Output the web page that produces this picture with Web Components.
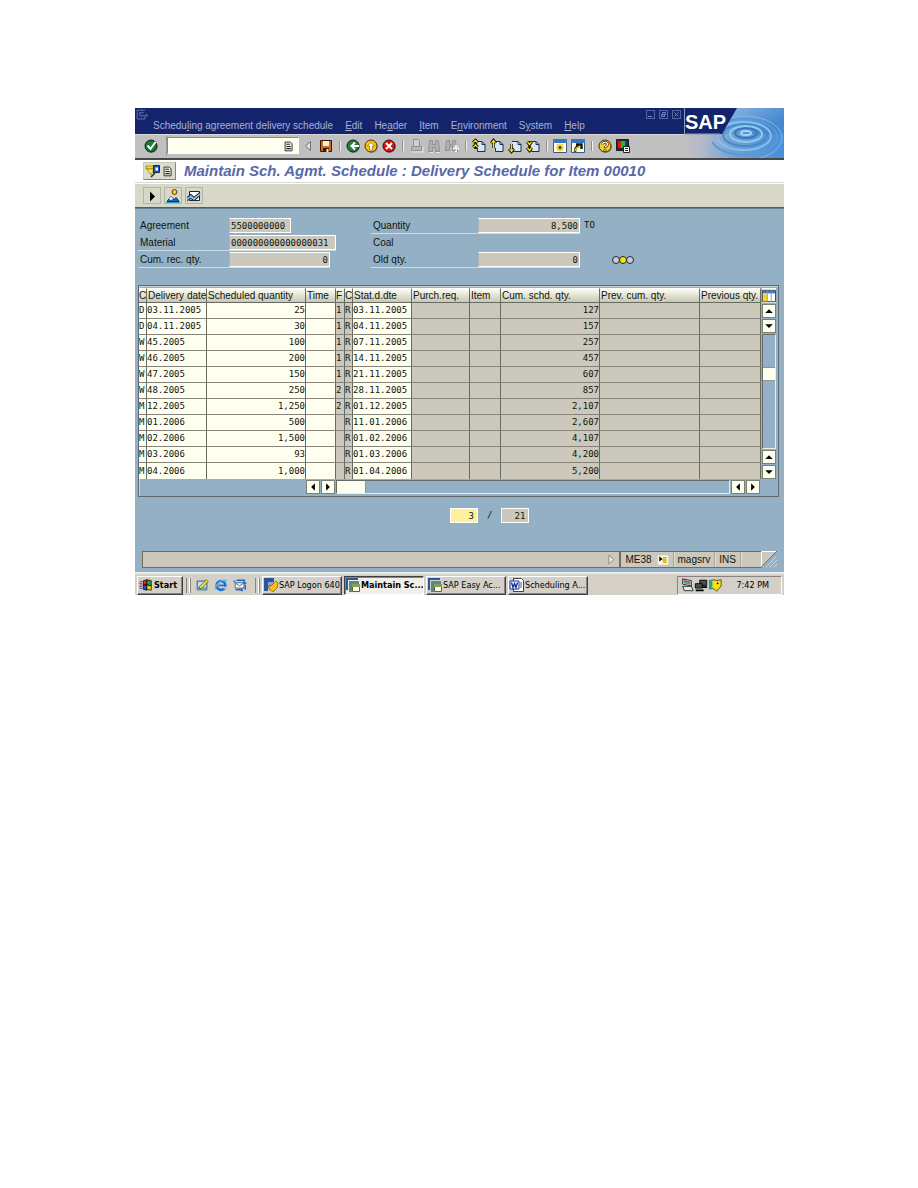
<!DOCTYPE html>
<html lang="en">
<head>
<meta charset="utf-8">
<title>Maintain Sch. Agmt. Schedule</title>
<style>
  body { margin: 0; background: #fff; font: 10px/12px "Liberation Sans", Arial, sans-serif; color: #10140c; }
  sap-window { margin: 108px 134px 0 135px; }
</style>
</head>
<body>
<sap-window>
  <sap-header slot="header"></sap-header>
  <sap-titlebar slot="header">Maintain Sch. Agmt. Schedule : Delivery Schedule for Item 00010</sap-titlebar>
  <sap-form></sap-form>
  <sap-schedule></sap-schedule>
  <sap-pager></sap-pager>
  <sap-status></sap-status>
  <win-taskbar slot="footer"></win-taskbar>
</sap-window>

<script>
const BASE = `<style>
  *, *::before, *::after { box-sizing: border-box; }
  :host { display: block; box-sizing: border-box; }
  button, input { font: inherit; color: inherit; margin: 0; padding: 0; border: 0; background: none; border-radius: 0; outline: 0; }
  button { display: flex; align-items: center; justify-content: center; }
  a { color: inherit; text-decoration: none; }
</style>`;

function define(name, html) {
  customElements.define(name, class extends HTMLElement {
    constructor() {
      super();
      this.attachShadow({ mode: 'open' });
    }
    connectedCallback() {
      const t = document.createElement('template');
      t.innerHTML = BASE + (typeof html === 'function' ? html(this) : html);
      this.shadowRoot.replaceChildren(t.content.cloneNode(true));
    }
  });
}

const page = '<path d="M5 3.5h6l3 3v7H6.5V10" fill="#d4e8f8" stroke="#203040"/><path d="M11 3.5v3h3" fill="none" stroke="#203040"/>';
const ICONS = {
  sysmenu: '<path d="M11.500 2.500h-9v10h9v-3M5 5.500h5M5.500 5v4h9M12 6.500l2.500 2.500" fill="none" stroke="#7080bc"/>',
  check: '<circle cx="8.500" cy="9" r="6" fill="#888"/><circle cx="8" cy="8" r="6" fill="#187838" stroke="#102010"/><path d="M4.5 7.5l3 3.5 5-7" fill="none" stroke="#fff" stroke-width="2"/>',
  list: '<path d="M3.5 3.5h6l2 2v8h-8z" fill="#f0f0e8" stroke="#202020"/><path d="M5 6h4M5 8.500h5M5 11h5" stroke="#202020" stroke-width="1.200"/>',
  left: '<path d="M10.5 3.5v9L5.500 8z" fill="#e0e0e0" stroke="#707070"/>',
  save: '<path d="M2.5 2.5h11v11h-11z" fill="#d06818" stroke="#301808"/><path d="M5 3h6v5H5z" fill="#f8f0d8"/><path d="M5 10h6v4H5z" fill="#381808"/><path d="M8.5 11h2v3h-2z" fill="#f0e8d8"/>',
  back: '<circle cx="9" cy="9" r="6" fill="#8890b0"/><circle cx="8" cy="8" r="6" fill="#208038" stroke="#102010"/><path d="M14 8H7M10 4.5L6.500 8l3.5 3.5" fill="none" stroke="#fff" stroke-width="2"/>',
  exit: '<circle cx="9" cy="9" r="6" fill="#8890b0"/><circle cx="8" cy="8" r="6" fill="#f8c010" stroke="#503808"/><path d="M4.5 8L8 4.5 11.5 8h-2v4h-3V8z" fill="#fff" stroke="#806008" stroke-width=".6"/>',
  cancel: '<circle cx="9" cy="9" r="6" fill="#8890b0"/><circle cx="8" cy="8" r="6" fill="#e01010" stroke="#400808"/><path d="M5 5l6 6M11 5l-6 6" stroke="#fff" stroke-width="2"/>',
  print: '<path d="M5.5 1.5h5l1 1v6h-6z" fill="#d0d0d0" stroke="#909090"/><path d="M3.5 8.5h10v4h-10z" fill="#b8b8b8" stroke="#909090"/><path d="M4 14h11V9" fill="none" stroke="#e8e8e8"/>',
  find: '<path d="M3.5 2.5h3v4h3v-4h3l1 11h-4v-4h-3v4h-4z" fill="#b0b0b0" stroke="#909090"/><path d="M4 14.5h3M10 14.5h4" stroke="#e8e8e8"/>',
  findnext: '<path d="M2.5 2.5h3v4h3v-4h3l1 10h-4v-4h-3v4h-4z" fill="#b0b0b0" stroke="#909090"/><path d="M12 7v7M9 10.5h6" stroke="#f0f0f0" stroke-width="2"/><path d="M13.5 11.500v3M10 12h2" stroke="#909090"/>',
  first: page + '<path d="M2 4.5L4.5 2 7 4.5M2 9l2.500-2.500L7 9M4.5 2v9" fill="none" stroke="#181808" stroke-width="2.6"/><path d="M2.5 4.5l2-2 2 2M2.5 9l2-2 2 2" fill="none" stroke="#ffe010" stroke-width="1.4"/>',
  prev: page + '<path d="M4.5 2v8M2 5l2.500-3L7 5" fill="none" stroke="#181808" stroke-width="2.6"/><path d="M4.5 3v7M2.5 5l2-2.500 2 2.500" fill="none" stroke="#ffe010" stroke-width="1.2"/>',
  next: page + '<path d="M4.5 6v8M2 11l2.500 3L7 11" fill="none" stroke="#181808" stroke-width="2.6"/><path d="M4.5 6v7M2.5 11l2 2.500 2-2.500" fill="none" stroke="#ffe010" stroke-width="1.2"/>',
  last: page + '<path d="M2 4l2.500 3L7 4M2 10l2.500 3L7 10M4.5 3v10" fill="none" stroke="#181808" stroke-width="2.6"/><path d="M2.5 4l2 2.500 2-2.500M2.5 10l2 2.500 2-2.500" fill="none" stroke="#ffe010" stroke-width="1.4"/>',
  session: '<path d="M1.5 1.5h13v13h-13z" fill="#fffff0" stroke="#405878"/><path d="M1 1h14v4H1z" fill="#3878c0"/><path d="M8 5.500v8M4 9.500h8M5 6.500l6 6M11 6.500l-6 6" stroke="#e8c000" stroke-width="1.4"/><circle cx="8" cy="9.500" r="1.200" fill="#303000"/>',
  shortcut: '<path d="M1.5 1.5h13v13h-13z" fill="#fffff0" stroke="#405878"/><path d="M1 1h14v4H1z" fill="#3878c0"/><path d="M5 14c0-4 1-5 4-6M6 6.500h5.500V11" fill="none" stroke="#181808" stroke-width="2.4"/><path d="M5 13.500c0-3 1-4 4-5" fill="none" stroke="#ffe010" stroke-width="1.200"/>',
  help: '<circle cx="9" cy="9" r="6" fill="#909090"/><circle cx="8" cy="8" r="6" fill="#f8d020" stroke="#403008"/><path d="M5.5 6.5c0-3 5-3 5 0 0 1.500-2.500 1.500-2.500 3.500" fill="none" stroke="#403008" stroke-width="2.6"/><path d="M5.5 6.5c0-3 5-3 5 0 0 1.500-2.500 1.500-2.500 3" fill="none" stroke="#fff" stroke-width="1.200"/><path d="M7 11h2v2H7z" fill="#fff" stroke="#403008" stroke-width=".6"/>',
  layout: '<path d="M1.5 1.5h12v11h-12z" fill="#282828" stroke="#202020"/><path d="M3 3h3v7H3z" fill="#e01818"/><path d="M6 3h4v7H6z" fill="#18c018"/><path d="M10 3h2v5h-2z" fill="#1838d0"/><path d="M8.5 8.5h6v6h-6z" fill="#fff" stroke="#202020"/><path d="M10 10.500h3M10 12.500h3" stroke="#202020"/>',
  services: '<path d="M1 3h8v3H1z" fill="#f8d818" stroke="#806800" stroke-width=".6"/><path d="M2 6l4 6 3-6z" fill="#f8e860" stroke="#806800" stroke-width=".6"/><path d="M8.5 2.5h6v7h-6z" fill="#2858b8" stroke="#102848"/><path d="M10.5 4.500h2.500v3h-2.500z" fill="#fff"/><path d="M6 14l4-4" stroke="#203040" stroke-width="1.6"/>',
  play: '<path d="M6 3.500l5 5-5 5z" fill="#000"/>',
  scene: '<path d="M2 13.5l4-5 3 3 2-2 3 4z" fill="#2868b8" stroke="#102848"/><path d="M4 11l2-2.500L8 11l-2 1z" fill="#fff"/><circle cx="9.500" cy="4" r="2.500" fill="#f8c820" stroke="#604008"/><path d="M1 14.5h14" stroke="#38a0d8"/>',
  chart: '<path d="M3.5 3.5h10v9h-10z" fill="#fff" stroke="#202020"/><path d="M1 9.5l4-3 3 3 6-5M1 12.5l4-2 3 2 6-5" fill="none" stroke="#183050" stroke-width="1.2"/><path d="M1 11l4-2.500 3 2.500 6-5" fill="none" stroke="#90b8d8" stroke-width="1.600"/>',
  config: '<path d="M.5 1.500h15v13H.5z" fill="#fff" stroke="#182840"/><path d="M1 2h14v3H1z" fill="#3878c8"/><path d="M1 5h5v9H1z" fill="#f8d820"/><path d="M6 2v12M10.500 2v12" stroke="#8098b0"/>',
  up: '<path d="M3 10.500l5-5 5 5z" fill="#000"/>',
  down: '<path d="M3 5.500l5 5 5-5z" fill="#000"/>',
  aleft: '<path d="M10.500 3v10l-5-5z" fill="#000"/>',
  aright: '<path d="M5.500 3v10l5-5z" fill="#000"/>',
  more: '<path d="M5.5 2.500v10l6-5z" fill="#e8e8d8" stroke="#888478"/>',
  tcode: '<path d="M1.5 2.5h13v11h-13z" fill="#ffffe0" stroke="#fff"/><path d="M8 5h5M7 8h6M8 11h5" stroke="#c8a000" stroke-width="2"/><path d="M3 3l4.500 3.500L3 10z" fill="#000"/>',
  win: '<g stroke="#000" stroke-width=".8"><path d="M5 3l4-1v6H5z" fill="#e02818"/><path d="M9 2l5 1v6L9 8z" fill="#30a030"/><path d="M5 8h4v6l-4-1z" fill="#2850c8"/><path d="M9 8l5 1v5l-5-1z" fill="#f8d010"/></g><path d="M1 4h3M0 6h4M1 8h3" stroke="#c02818"/><path d="M0 10h4M1 12h3" stroke="#2850c8"/>',
  desk: '<path d="M2.5 3.5h11v10h-11z" fill="#b8e0f0" stroke="#284878"/><path d="M3 11c4-3 6 1 10-1v3H3z" fill="#68a8c8"/><path d="M5 10l8-8 2 2-8 8H5z" fill="#f8e040" stroke="#604808" stroke-width=".8"/>',
  ie: '<circle cx="8" cy="8.500" r="5" fill="none" stroke="#2070d0" stroke-width="3"/><path d="M5 8.500h8" stroke="#2070d0" stroke-width="2"/><path d="M10.5 11h4" stroke="#d4d0c8" stroke-width="2"/><path d="M1 13C3 6 9 1 15 3" fill="none" stroke="#68b0f0" stroke-width="1.4"/>',
  mail: '<path d="M2.5 5.5h10v6h-10z" fill="#fff" stroke="#405878"/><path d="M3 6l4.500 3L12 6" fill="none" stroke="#405878"/><path d="M4 2.500h9v3M1 5l1-2M3 13.500h7M14 8v5.500" fill="none" stroke="#1868d0" stroke-width="1.6"/><path d="M11 5l2.500 3L16 5zM11 11l-3 2.500 3 2.500z" fill="#1868d0"/>',
  logon: '<path d="M1 1h10v4H5v9H1z" fill="#285898"/><path d="M5 5h6v6H5z" fill="#88a8d0"/><path d="M6 8l2 1 5-5 2 2-1 5-4 4-4-3z" fill="#f8c018" stroke="#a05808" stroke-width=".8"/>',
  sapwin: '<path d="M1 1h12v2H3v10H1z" fill="#285898"/><path d="M4 4h10v3H7v8H4z" fill="#588888"/><path d="M7.5 7.5h7v7h-7z" fill="#fffff0" stroke="#506838"/><path d="M7 7h8v3H7z" fill="#88a048"/>',
  word: '<path d="M4.5 1.5h8l2 2v11h-10z" fill="#fff" stroke="#404040"/><path d="M1 4h9v8H1z" fill="#fff" stroke="#1830a0"/><path d="M2.5 5.5l1.500 5 1.500-4 1.500 4 1.500-5" fill="none" stroke="#1830a0" stroke-width="1.4"/><path d="M11 6h2M11 8h2M11 10h2" stroke="#606060"/>',
  traymon: '<path d="M3 1l10 2v6L3 7z" fill="#f0f0f0" stroke="#202020"/><path d="M4 2l8 2v2L4 4z" fill="#e020c0"/><path d="M4 4l8 2v2L4 6z" fill="#20c040"/><path d="M3 9.500h10l2 5H5z" fill="#e8e8e8" stroke="#202020"/>',
  traynet: '<path d="M6.5 2.5h8v6h-8z" fill="#485058" stroke="#000"/><path d="M1.5 6.500h8v5h-8z" fill="#485058" stroke="#000"/><path d="M2 14h9M9 10.500h6" stroke="#000" stroke-width="2"/>',
  trayshield: '<path d="M3 3l4-1 3 1 5-1v7l-5 6-4-3-3-1z" fill="#f8e018" stroke="#504808"/><path d="M1 2h4v11H1z" fill="#28a0a0"/><circle cx="11" cy="6" r="1" fill="#000"/>'
};

define('sap-icon', el => `<style>
  :host { flex: none; width: 14px; height: 14px; }
  :host([size="16"]) { width: 16px; height: 16px; }
  :host([size="12"]) { width: 12px; height: 12px; }
  svg { display: block; width: 100%; height: 100%; }
</style><svg viewBox="0 0 16 16" aria-hidden="true">${ICONS[el.getAttribute('name')]}</svg>`);

define('sap-window', `<style>
  main { background: #94b0c4; padding: 9px 5px 4px 3px; border-top: 1px solid #688494; border-bottom: 1px solid #e8ecec; }
</style>
<slot name="header"></slot>
<main><slot></slot></main>
<slot name="footer"></slot>`);

define('sap-brand', `<style>
  svg { display: block; width: 100%; height: 50px; }
  text { font: bold 20px/22px "Liberation Sans", Arial, sans-serif; }
</style>
<svg viewBox="0 0 100 50" preserveAspectRatio="none" role="img" aria-label="SAP">
  <defs>
    <linearGradient id="w" x1="0" x2="1"><stop offset="0" stop-color="#c0c0c0"/><stop offset=".2" stop-color="#b0b8cc"/><stop offset=".5" stop-color="#70a0d0"/><stop offset="1" stop-color="#4890d8"/></linearGradient>
    <linearGradient id="t" x1="0" x2="1" y2=".4"><stop offset=".4" stop-color="#88b4dc"/><stop offset="1" stop-color="#4488d0"/></linearGradient>
    <clipPath id="c"><path d="M53 0H100V50H16L34 27z"/></clipPath>
  </defs>
  <path d="M0 0h100v26H0z" fill="url(#t)"/>
  <path d="M0 26h100v24H0z" fill="url(#w)"/>
  <g clip-path="url(#c)" fill="none" stroke-width="2">
    <ellipse cx="62" cy="25" rx="5" ry="2" stroke="#a8d8f8"/>
    <ellipse cx="62" cy="25" rx="11" ry="5" stroke="#3878c0"/>
    <ellipse cx="62" cy="26" rx="16" ry="8" stroke="#90ccf4"/>
    <ellipse cx="61" cy="27" rx="22" ry="11" stroke="#4888cc"/>
    <ellipse cx="60" cy="28" rx="27" ry="14" stroke="#84c0f0"/>
    <ellipse cx="60" cy="29" rx="33" ry="18" stroke="#5898d8"/>
    <ellipse cx="60" cy="30" rx="38" ry="22" stroke="#80b8ec" stroke-width="1"/>
  </g>
  <path d="M0 0h53Q46 12 38 26H0z" fill="#14246c"/>
  <path d="M0 26h36" stroke="#9098b0"/>
  <path d="M.5 0v26" stroke="#9098b0"/>
  <text x="1" y="21" fill="#fff">SAP</text>
</svg>`);

const tools = [
  ['left', 'Close command field'], ['save', 'Save'], null, ['back', 'Back'], ['exit', 'Exit'], ['cancel', 'Cancel'], null,
  ['print', 'Print'], ['find', 'Find'], ['findnext', 'Find next'], null,
  ['first', 'First page'], ['prev', 'Previous page'], ['next', 'Next page'], ['last', 'Last page'], null,
  ['session', 'New session'], ['shortcut', 'Create shortcut'], null, ['help', 'Help'], ['layout', 'Customise layout']
];
define('sap-header', `<style>
  :host { display: grid; grid-template-columns: 1fr 100px; grid-template-rows: 26px 24px; border-bottom: 2px solid #484848; background: #c0c0c0; }
  .menu { background: #14246c; color: #a8b0d8; display: grid; grid-template-rows: 12px 14px; }
  .caption { display: flex; justify-content: space-between; padding: 0 3px 0 0; }
  .caption div { display: flex; gap: 4px; padding-top: 2px; }
  .caption div button { width: 9px; height: 9px; border: 1px solid #5464a4; color: #7484bc; }
  .caption svg { width: 7px; height: 7px; display: block; }
  nav { display: flex; gap: 12px; padding-left: 18px; white-space: nowrap; }
  sap-brand { grid-column: 2; grid-row: 1 / 3; }
  .bar { display: flex; align-items: center; border-top: 1px solid #d8d8d8; padding-bottom: 2px; }
  .bar button { width: 18px; height: 20px; flex: none; }
  .bar .ok { width: 32px; border-right: 1px solid #989898; }
  .cmd { display: flex; align-items: center; background: #fffff0; width: 132px; height: 17px; border: 1px solid #888; border-color: #888 #fff #fff #888; }
  .cmd input { flex: 1; min-width: 0; }
  .sep { width: 9px; height: 10px; flex: none; display: flex; justify-content: center; }
  .sep::before { content: ""; width: 2px; border-left: 1px solid #909090; background: #f0f0f0; }
</style>
<div class="menu">
  <div class="caption"><sap-icon name="sysmenu"></sap-icon>
    <div>
      <button aria-label="Minimise"><svg viewBox="0 0 7 7"><path d="M1 5.5h4" stroke="currentColor"/></svg></button>
      <button aria-label="Restore"><svg viewBox="0 0 7 7"><path d="M2.5 1.5h3v2h-3zM1.5 3.5h3v2h-3z" fill="none" stroke="currentColor"/></svg></button>
      <button aria-label="Close"><svg viewBox="0 0 7 7"><path d="M1.5 1.5l4 4M5.5 1.5l-4 4" stroke="currentColor"/></svg></button>
    </div>
  </div>
  <nav>
    <a href="#">Schedu<u>l</u>ing agreement delivery schedule</a>
    <a href="#"><u>E</u>dit</a><a href="#">He<u>a</u>der</a><a href="#"><u>I</u>tem</a>
    <a href="#">E<u>n</u>vironment</a><a href="#">S<u>y</u>stem</a><a href="#"><u>H</u>elp</a>
  </nav>
</div>
<div class="bar">
  <button class="ok" aria-label="Enter"><sap-icon name="check" size="16"></sap-icon></button>
  <div class="cmd"><input aria-label="Command"><button aria-label="Command history"><sap-icon name="list"></sap-icon></button></div>
  ${tools.map(t => t ? `<button aria-label="${t[1]}"><sap-icon name="${t[0]}" size="16"></sap-icon></button>` : '<span class="sep"></span>').join('')}
</div>
<sap-brand></sap-brand>`);

define('sap-titlebar', `<style>
  .title { display: flex; align-items: center; height: 23px; background: #fff; border-bottom: 1px solid #d8d8d8; padding-left: 8px; gap: 8px; }
  .title button { width: 33px; height: 18px; background: #dcdccc; border: 1px solid; border-color: #c8c8c0 #888478 #888478 #c8c8c0; }
  h1 { margin: 0; font: italic bold 15px/18px "Liberation Sans", Arial, sans-serif; color: #5868a8; white-space: nowrap; }
  .tools { display: flex; align-items: center; height: 25px; background: #d8d8c8; border-top: 1px solid #fff; border-bottom: 1px solid #585c58; padding-left: 8px; gap: 3px; }
  .tools button { width: 18px; height: 17px; border: 1px solid #b4b4a8; }
</style>
<div class="title"><button aria-label="Services for object"><sap-icon name="services" size="16"></sap-icon><sap-icon name="list"></sap-icon></button><h1><slot></slot></h1></div>
<div class="tools">
  <button aria-label="Execute"><sap-icon name="play" size="16"></sap-icon></button>
  <button aria-label="Overview"><sap-icon name="scene" size="16"></sap-icon></button>
  <button aria-label="Graphic"><sap-icon name="chart" size="16"></sap-icon></button>
</div>`);

define('sap-field', el => {
  const v = el.getAttribute('value');
  return `<style>
  :host { display: flex; height: 17px; align-items: flex-start; }
  .line { display: flex; height: 16px; border-bottom: 1px solid transparent; }
  :host([lined]) .line { border-color: #c8dce4; }
  label, .label { width: var(--label, 91px); padding: 2px 2px 0; flex: none; }
  input { height: 15px; width: var(--w, 101px); background: #ccc8bc; border: 1px solid #fff; border-left-color: #b0b4b0; padding: 0 1px; font: 9px/13px "DejaVu Sans Mono", monospace; }
  input.num { text-align: right; }
  .unit { font: 9px/15px "DejaVu Sans Mono", monospace; padding-left: 4px; }
  .lamps { padding: 2px 0 0 31px; }
  svg { display: block; }
</style>
<div class="line">${v === null ? `<span class="label">${el.getAttribute('label')}</span>` : `<label for="f">${el.getAttribute('label')}</label><input id="f" readonly value="${v}" class="${el.hasAttribute('num') ? 'num' : ''}">`}</div>
${el.hasAttribute('unit') ? `<span class="unit">${el.getAttribute('unit')}</span>` : ''}
${el.hasAttribute('lamps') ? `<span class="lamps"><svg width="24" height="12" viewBox="0 0 24 12" role="img" aria-label="Yellow"><g stroke="#202830"><circle cx="5" cy="6" r="3.5" fill="#c8ccd8"/><circle cx="19" cy="6" r="3.5" fill="#c8ccd8"/><circle cx="12" cy="6" r="3.5" fill="#f8e800"/></g></svg></span>` : ''}`;
});

define('sap-form', `<style>
  :host { display: grid; grid-template-columns: 233px 1fr; padding-bottom: 16px; }
  .r { --label: 107px; --w: 102px; }
  .agr { --w: 62px; } .mat { --w: 107px; }
</style>
<sap-field class="agr" label="Agreement" value="5500000000"></sap-field>
<sap-field class="r" lined num label="Quantity" value="8,500" unit="TO"></sap-field>
<sap-field class="mat" lined label="Material" value="000000000000000031"></sap-field>
<sap-field class="r" label="Coal"></sap-field>
<sap-field lined num label="Cum. rec. qty." value="0"></sap-field>
<sap-field class="r" lined num label="Old qty." value="0" lamps></sap-field>`);

define('sap-scroll', el => {
  const v = el.hasAttribute('vertical');
  const [a, b] = v ? ['up', 'down'] : ['aleft', 'aright'];
  const btn = (n, l) => `<button aria-label="${l}"><sap-icon name="${n}" size="12"></sap-icon></button>`;
  return `<style>
  :host { display: flex; gap: 1px; flex-direction: ${v ? 'column' : 'row'}; }
  button { width: 14px; height: 14px; flex: none; background: #fffff0; border: 1px solid #788078; }
  .track { flex: 1; display: flex; flex-direction: inherit; border: 1px solid; border-color: #686c68 #e8f0f0 #e8f0f0 #686c68; }
  .before { flex: 0 0 ${v ? '32px' : '0px'}; }
  .thumb { flex: 0 0 ${v ? '14px' : '29px'}; background: #fffff0; border: 1px solid #909488; border-width: ${v ? '1px 0' : '0 1px 0 0'}; }
</style>
${btn(a, 'Back')}${btn(b, 'Forward')}<div class="track"><div class="before"></div><div class="thumb"></div></div>${btn(a, 'Back')}${btn(b, 'Forward')}`;
});

const rows = [
  ['D', '03.11.2005', '25', '1', '03.11.2005', '127'],
  ['D', '04.11.2005', '30', '1', '04.11.2005', '157'],
  ['W', '45.2005', '100', '1', '07.11.2005', '257'],
  ['W', '46.2005', '200', '1', '14.11.2005', '457'],
  ['W', '47.2005', '150', '1', '21.11.2005', '607'],
  ['W', '48.2005', '250', '2', '28.11.2005', '857'],
  ['M', '12.2005', '1,250', '2', '01.12.2005', '2,107'],
  ['M', '01.2006', '500', '', '11.01.2006', '2,607'],
  ['M', '02.2006', '1,500', '', '01.02.2006', '4,107'],
  ['M', '03.2006', '93', '', '01.03.2006', '4,200'],
  ['M', '04.2006', '1,000', '', '01.04.2006', '5,200']
];
const cols = [['C', 8], ['Delivery date', 60], ['Scheduled quantity', 99], ['Time', 30], ['F', 9], ['C', 8], ['Stat.d.dte', 59], ['Purch.req.', 58], ['Item', 31], ['Cum. schd. qty.', 99], ['Prev. cum. qty.', 100], ['Previous qty.', 0]];
const edit = (label, v, cls = '') => `<td class="e"><input aria-label="${label}" class="${cls}" value="${v}"></td>`;
define('sap-schedule', `<style>
  .panel { border: 1px solid #60686c; box-shadow: inset 1px 1px #c8d4d8; padding: 2px 2px 2px 0; display: grid; grid-template-columns: 1fr 15px; }
  table { border-collapse: separate; border-spacing: 0; table-layout: fixed; width: 100%; }
  th { height: 15px; padding: 0 0 0 1px; font-weight: normal; text-align: left; line-height: 13px; white-space: nowrap; overflow: hidden; background: linear-gradient(#fcfcf0, #c8c8b8); border: 1px solid; border-color: #fff #686c60 #686c60 #fff; border-left-width: 0; }
  th.narrow { padding: 0; }
  td { height: 16px; padding: 0; background: #ccc8bc; border-right: 1px solid #686c60; border-bottom: 1px solid #84847c; font: 9px/15px "DejaVu Sans Mono", monospace; overflow: hidden; white-space: nowrap; }
  tr:last-child td { border-bottom: 0; }
  td.e { background: #fffff0; }
  td.num { text-align: right; }
  input { display: block; width: 100%; height: 15px; }
  input.num { text-align: right; }
  .side { display: flex; flex-direction: column; padding-left: 1px; }
  .config { width: 14px; height: 15px; background: #fffff0; }
  .side sap-scroll { flex: 1; margin-top: 1px; }
  .bottom { padding: 1px 1px 0 167px; }
</style>
<div class="panel">
  <table>
    <colgroup>${cols.map(c => `<col${c[1] ? ` style="width:${c[1]}px"` : ''}>`).join('')}</colgroup>
    <thead><tr>${cols.map(c => `<th scope="col"${c[0].length === 1 ? ' class="narrow"' : ''}>${c[0]}</th>`).join('')}</tr></thead>
    <tbody>${rows.map(r => `<tr>${edit('Category', r[0])}${edit('Delivery date', r[1])}${edit('Scheduled quantity', r[2], 'num')}${edit('Time', '')}<td>${r[3]}</td><td>R</td>${edit('Statistical delivery date', r[4])}<td></td><td></td><td class="num">${r[5]}</td><td></td><td></td></tr>`).join('')}</tbody>
  </table>
  <div class="side"><button class="config" aria-label="Table settings"><sap-icon name="config"></sap-icon></button><sap-scroll vertical></sap-scroll></div>
  <div class="bottom"><sap-scroll></sap-scroll></div>
</div>`);

define('sap-pager', `<style>
  :host { display: flex; align-items: center; gap: 9px; padding: 11px 0 28px 312px; font: 9px/13px "DejaVu Sans Mono", monospace; }
  input { width: 28px; height: 15px; border: 1px solid #fff; text-align: right; padding-right: 3px; background: #ccc8bc; }
  .cur { background: #fff0a0; }
</style>
<input class="cur" aria-label="Current line" value="3"><span>/</span><input aria-label="Total lines" readonly value="21">`);

define('sap-status', `<style>
  :host { display: flex; height: 17px; margin: 0 2px 0 4px; background: #ccc8bc; border: 1px solid #706c60; border-right-color: #e8e8e0; line-height: 15px; }
  .msg { flex: 1; display: flex; justify-content: flex-end; align-items: center; padding-right: 1px; border-right: 2px solid #706c60; }
  .cell { display: flex; align-items: center; gap: 5px; padding: 0 4px; border-right: 1px solid #a8a498; box-shadow: 1px 0 #e0e0d4; }
  .blank { width: 20px; }
  svg { display: block; width: 16px; height: 17px; margin: -1px -1px -1px 0; flex: none; }
</style>
<div class="msg"><sap-icon name="more"></sap-icon></div>
<div class="cell">ME38 <sap-icon name="tcode" size="12"></sap-icon></div>
<div class="cell">magsrv</div>
<div class="cell">INS</div>
<div class="blank"></div>
<svg viewBox="0 0 16 17" aria-hidden="true"><path d="M0 17L16 0v17z" fill="#94b0c4"/><path d="M.5 16V.5H16" fill="none" stroke="#fff"/><path d="M0 16.5L16 0" stroke="#706c60"/><path d="M5 16L16 5M9 16l7-7M13 16l3-3" stroke="#dce8ec" stroke-dasharray="2 1"/></svg>`);

define('win-taskbar', `<style>
  :host { display: flex; align-items: center; height: 22px; background: #d4d0c8; border-top: 1px solid #e8e8e0; padding: 1px 2px 0; font: 9px/12px "DejaVu Sans Condensed", "DejaVu Sans", sans-serif; color: #000; }
  button { height: 19px; justify-content: flex-start; white-space: nowrap; border: 1px solid; border-color: #fff #404040 #404040 #fff; box-shadow: inset -1px -1px #888480; }
  .start { width: 46px; padding-left: 1px; font-weight: bold; gap: 1px; }
  .grip { width: 10px; height: 15px; flex: none; display: flex; justify-content: center; gap: 2px; padding: 0 2px; }
  .grip::before, .grip::after { content: ""; width: 1px; background: #888480; }
  .grip::after { width: 2px; background: #fff; border-right: 1px solid #888480; }
  .quick { display: flex; gap: 5px; padding: 0 5px 0 2px; }
  .quick button { border: 0; box-shadow: none; width: 14px; }
  .tasks { display: flex; gap: 2px; flex: 1; min-width: 0; }
  .tasks button { width: 80px; overflow: hidden; }
  .tasks .on { font-weight: bold; background: #f0efe8; border-color: #404040 #fff #fff #404040; box-shadow: inset 1px 1px #888480; }
  .tray { display: flex; align-items: center; width: 105px; height: 19px; border: 1px solid; border-color: #888480 #fff #fff #888480; padding: 0 12px 0 2px; }
  time { margin-left: auto; }
</style>
<button class="start"><sap-icon name="win"></sap-icon>Start</button>
<span class="grip"></span>
<div class="quick">
  <button aria-label="Show desktop"><sap-icon name="desk"></sap-icon></button>
  <button aria-label="Internet Explorer"><sap-icon name="ie"></sap-icon></button>
  <button aria-label="Outlook Express"><sap-icon name="mail"></sap-icon></button>
</div>
<span class="grip"></span>
<div class="tasks">
  <button><sap-icon name="logon" size="16"></sap-icon>SAP Logon 640</button>
  <button class="on"><sap-icon name="sapwin" size="16"></sap-icon>Maintain Sc...</button>
  <button><sap-icon name="sapwin" size="16"></sap-icon>SAP Easy Ac...</button>
  <button><sap-icon name="word" size="16"></sap-icon>Scheduling A...</button>
</div>
<div class="tray"><sap-icon name="traymon"></sap-icon><sap-icon name="traynet"></sap-icon><sap-icon name="trayshield"></sap-icon><time>7:42 PM</time></div>`);
</script>
</body>
</html>
